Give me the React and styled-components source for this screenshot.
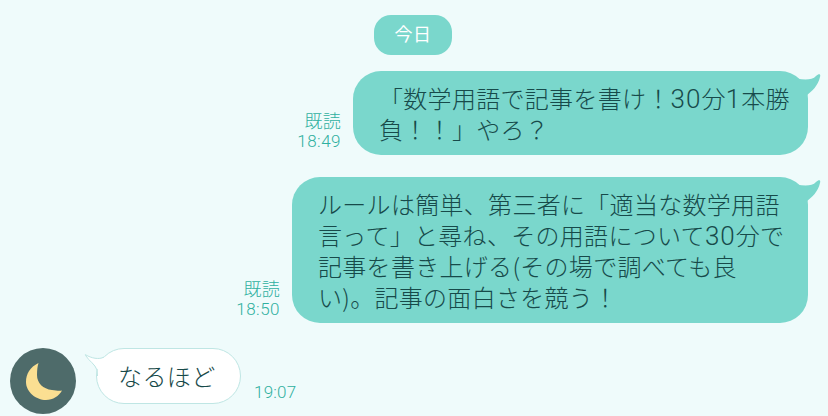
import styled, { createGlobalStyle } from "styled-components";

const GlobalStyle = createGlobalStyle`
  html, body {
    margin: 0;
    padding: 0;
    background: #effbfb;
  }
  body {
    font-family: "Noto Sans CJK JP", "Noto Sans", sans-serif;
    color: #174a4a;
  }
`;

const Chat = styled.div`
  width: 828px;
  height: 416px;
  overflow: hidden;
  box-sizing: border-box;
  padding: 15px 20px 0 10px;
  display: flex;
  flex-direction: column;
`;

const DatePill = styled.div`
  align-self: flex-start;
  margin: 0 0 16px 364px;
  width: 78px;
  height: 40px;
  line-height: 37px;
  border-radius: 17px;
  background: #7ad7cc;
  color: #fff;
  font-size: 18px;
  letter-spacing: 0.5px;
  text-align: center;
`;

const SentRow = styled.div`
  display: flex;
  justify-content: flex-end;
  align-items: flex-end;
  gap: 12px;
  margin-bottom: ${(p) => p.$gap}px;
`;

const Meta = styled.div`
  display: flex;
  flex-direction: column;
  align-items: flex-end;
  color: #2fb0a0;
  font-size: 18px;
  font-weight: 300;
  line-height: 21px;
  letter-spacing: 0.3px;
  padding-bottom: 3px;
`;

const Time = styled.span`
  font-family: Roboto, sans-serif;
  font-size: 17px;
  font-weight: 300;
  letter-spacing: 0.5px;
`;

const SentBubble = styled.div`
  position: relative;
  box-sizing: border-box;
  width: ${(p) => p.$width}px;
  padding: 11px 0 11px 26px;
  background: #7ad7cc;
  border-radius: 28px;
  font-size: 24px;
  font-weight: 300;
  line-height: 31px;
  letter-spacing: 0.3px;
  white-space: nowrap;
`;

const Digits = styled.span`
  font-family: Roboto, sans-serif;
  font-size: 26px;
  line-height: 1;
  letter-spacing: 1px;
`;

const SentTail = styled.svg`
  position: absolute;
  top: 3px;
  right: -13px;
  width: 30px;
  height: 24px;
`;

const ReceivedRow = styled.div`
  display: flex;
  align-items: flex-start;
`;

const Avatar = styled.div`
  flex: none;
  width: 66px;
  height: 66px;
  border-radius: 50%;
  background: #4e6b6a;
  display: flex;
  align-items: center;
  justify-content: center;
`;

const ReceivedBubble = styled.div`
  position: relative;
  box-sizing: border-box;
  margin-left: 20px;
  width: 145px;
  height: 56px;
  line-height: 54px;
  padding-left: 21px;
  background: #fff;
  border: 1px solid #bfe6e4;
  border-radius: 28px;
  font-size: 24px;
  font-weight: 300;
  letter-spacing: 0.4px;
`;

const ReceivedTail = styled.svg`
  position: absolute;
  top: 3px;
  left: -13px;
  width: 32px;
  height: 26px;
`;

const ReceivedTime = styled(Time)`
  align-self: flex-end;
  margin: 0 0 12px 13px;
  color: #2fb0a0;
  letter-spacing: 0.2px;
`;

const Tail = () => (
  <SentTail viewBox="0 0 30 24">
    <path d="M0 3 C6 5 20 8 25 2 C28 -1 30 0 29 3 C27 12 21 17 16 21 L0 21 Z" fill="#7ad7cc" />
  </SentTail>
);

const App = () => {
  return (
    <>
      <GlobalStyle />
      <Chat>
        <DatePill>今日</DatePill>
        <SentRow $gap={22}>
          <Meta>
            既読
            <Time>18:49</Time>
          </Meta>
          <SentBubble $width={455}>
            「数学用語で記事を書け！<Digits>30</Digits>分<Digits>1</Digits>本勝
            <br />
            負！！」やろ？
            <Tail />
          </SentBubble>
        </SentRow>
        <SentRow $gap={25}>
          <Meta>
            既読
            <Time>18:50</Time>
          </Meta>
          <SentBubble $width={516}>
            ルールは簡単、第三者に「適当な数学用語
            <br />
            言って」と尋ね、その用語について<Digits>30</Digits>分で
            <br />
            記事を書き上げる(その場で調べても良
            <br />
            い)。記事の面白さを競う！
            <Tail />
          </SentBubble>
        </SentRow>
        <ReceivedRow>
          <Avatar>
            <svg width="40" height="40" viewBox="0 0 40 40">
              <path
                d="M15.5 2 C7 6 3 13 3 21 C3 31 13 39 23 39 C30 39 36 35 39 29.5 C36 30 33 29.5 29 29 C20 28 14 22 14 14 C14 9 14.5 5 15.5 2 Z"
                fill="#fbdf92"
              />
            </svg>
          </Avatar>
          <ReceivedBubble>
            なるほど
            <ReceivedTail viewBox="0 0 32 26">
              <path
                d="M21 5 C15 8 7 6 2 3 C1 2 1 3 2 4 C5 9 11 12 14 18 L14 24 L32 24 L32 5 Z"
                fill="#fff"
              />
              <path
                d="M20 5 C15 8 7 6 2 3 C1 2 1 3 2 4 C5 9 11 12 13 18 L13.5 24"
                fill="none"
                stroke="#bfe6e4"
              />
            </ReceivedTail>
          </ReceivedBubble>
          <ReceivedTime>19:07</ReceivedTime>
        </ReceivedRow>
      </Chat>
    </>
  );
};

export default App;
